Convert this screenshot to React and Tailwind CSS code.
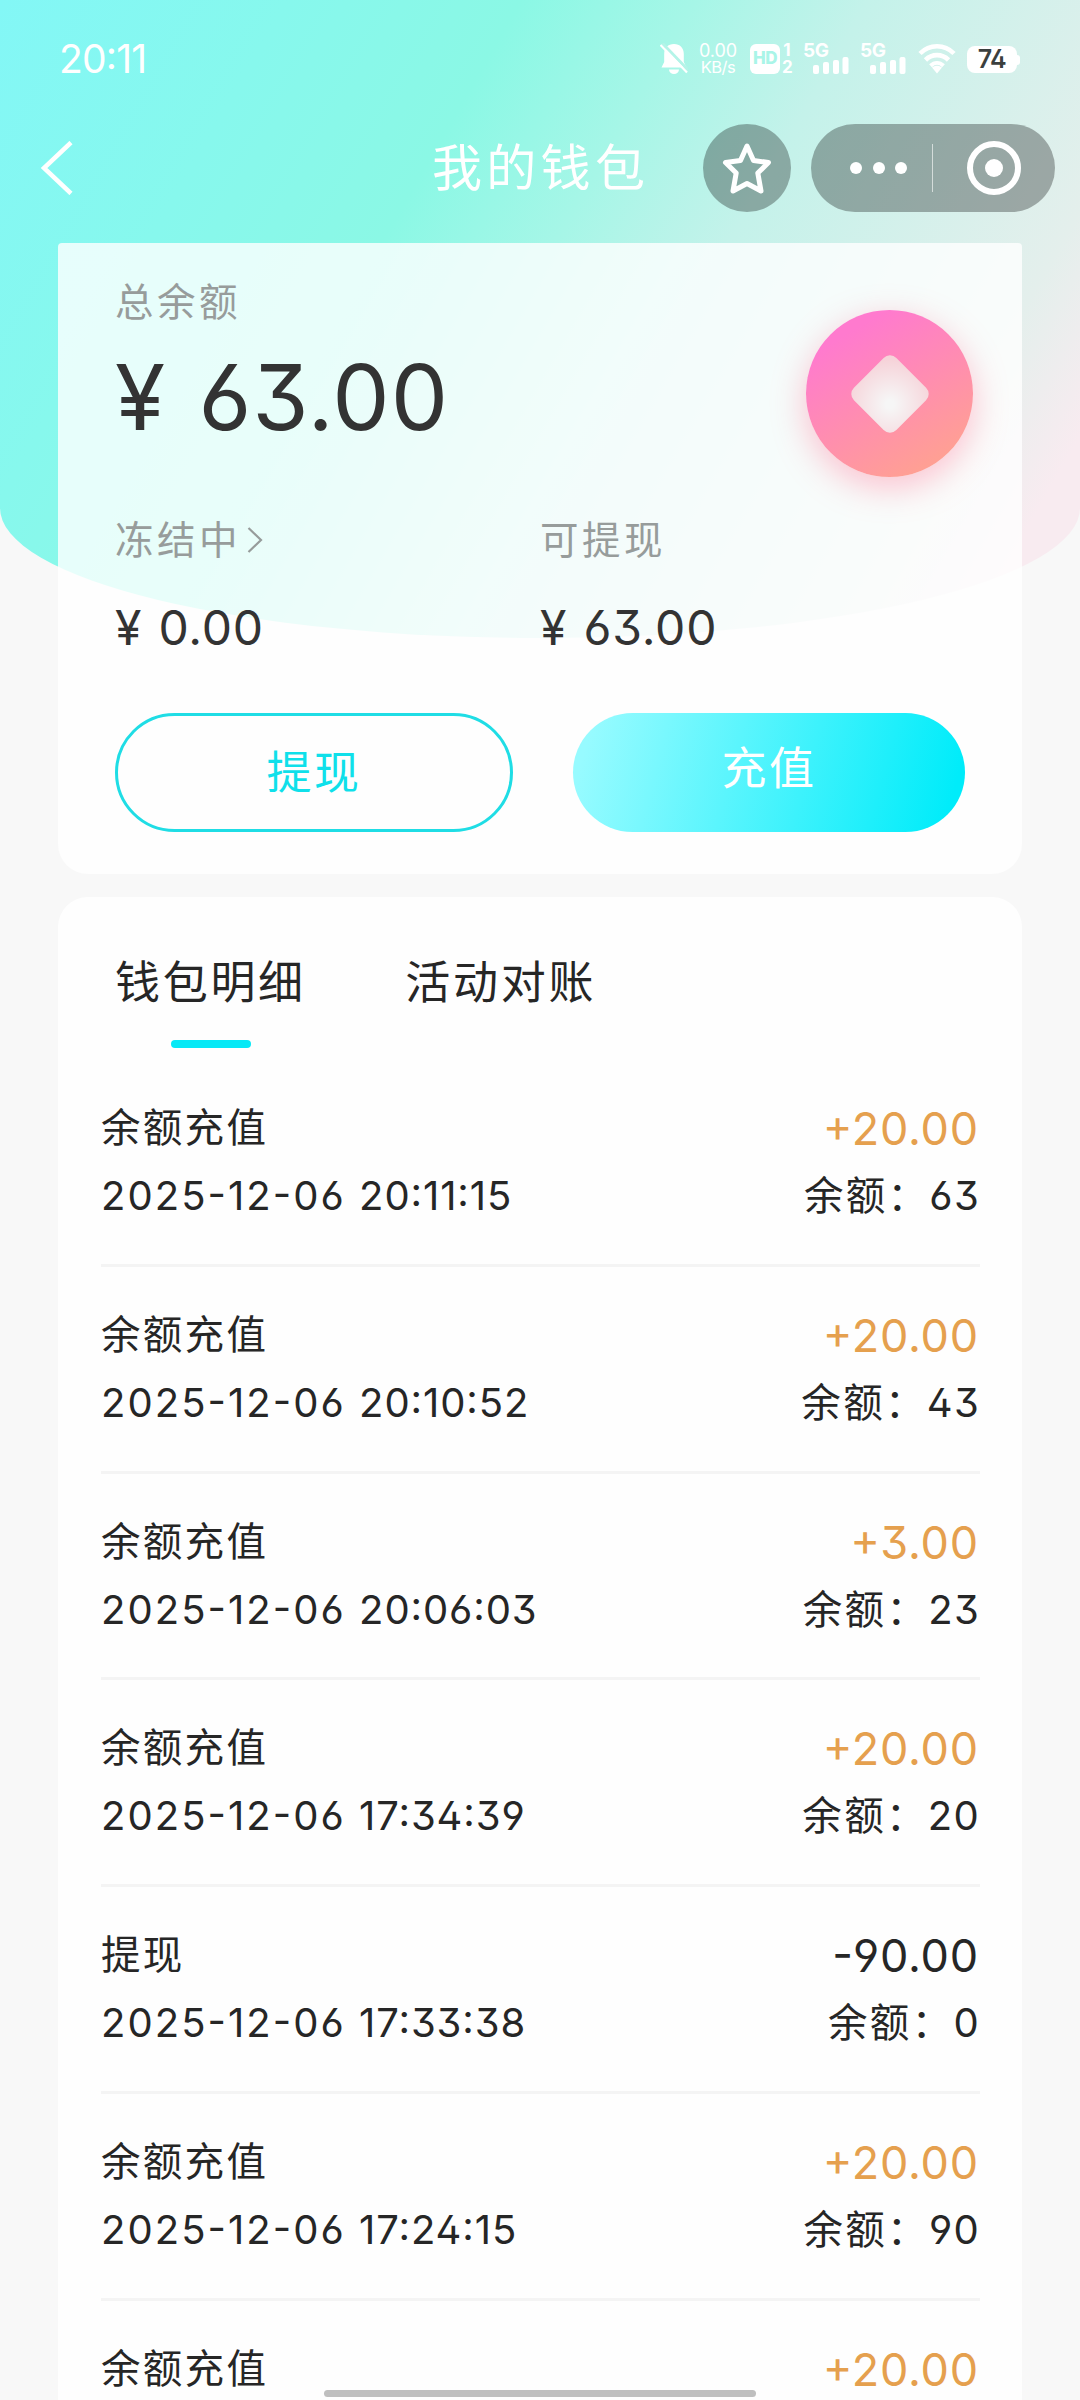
import { useState } from "react";

const records = [
  { title: "余额充值", date: "2025-12-06", time: "20:11:15", amount: "+20.00", balance: "63" },
  { title: "余额充值", date: "2025-12-06", time: "20:10:52", amount: "+20.00", balance: "43" },
  { title: "余额充值", date: "2025-12-06", time: "20:06:03", amount: "+3.00", balance: "23" },
  { title: "余额充值", date: "2025-12-06", time: "17:34:39", amount: "+20.00", balance: "20" },
  { title: "提现", date: "2025-12-06", time: "17:33:38", amount: "-90.00", balance: "0" },
  { title: "余额充值", date: "2025-12-06", time: "17:24:15", amount: "+20.00", balance: "90" },
  { title: "余额充值", amount: "+20.00" },
];

const tabs = ["钱包明细", "活动对账"];

// --- Status bar icons ---
const BellOff = () => (
  <svg width="28" height="32" viewBox="0 0 28 32" fill="none">
    <path
      d="M14 1C8 1 4.200 5 4.200 11v8L1.500 24.500h25L23.800 19v-8C23.800 5 20 1 14 1zM9 26.500a5 4.500 0 0 0 10 0z"
      fill="white"
    />
    <path d="M2.500 0.500L28 27" stroke="#b4f4e8" strokeWidth="3" />
    <path d="M0.500 2L27 29.500" stroke="white" strokeWidth="2.200" />
  </svg>
);

const Signal = () => (
  <div className="relative h-[31px] w-[46px]">
    <span className="absolute left-0 -top-[2px] text-[19px] leading-[19px] font-bold tracking-[-0.5px]">5G</span>
    <svg className="absolute bottom-0 right-0" width="36" height="17" viewBox="0 0 36 17" fill="white">
      <rect x="0" y="8" width="6" height="9" rx="2" />
      <rect x="10" y="5" width="6" height="12" rx="2" />
      <rect x="20" y="3" width="6" height="14" rx="2" />
      <rect x="29.500" y="0" width="6" height="17" rx="2" />
    </svg>
  </div>
);

const Wifi = () => (
  <svg width="38" height="31" viewBox="0 0 38 31" fill="none" stroke="white" strokeWidth="4.600">
    <path d="M2 10.500C11.500 0.800 26.500 0.800 36 10.500" />
    <path d="M7.500 17C14 10.500 24 10.500 30.500 17" />
    <path d="M12.500 22.800C16.500 19 21.500 19 25.500 22.800" strokeWidth="4" />
    <path d="M14 24.500L19 30.500L24 24.500C21 22.300 17 22.300 14 24.500z" fill="white" stroke="none" />
  </svg>
);

const StatusBar = () => (
  <div className="flex h-[117px] shrink-0 items-center justify-between pl-[59px] pr-[60px] text-white">
    <span className="text-[39px] leading-[40px] tracking-[-0.8px]">20:11</span>
    <div className="flex items-center">
      <BellOff />
      <div className="ml-[11px] w-[38px] text-center text-[18px] leading-[17px] tracking-[-0.1px]">
        <div>0.00</div>
        <div className="text-[16.500px] leading-[16px] tracking-[-0.5px]">KB/s</div>
      </div>
      <div className="ml-[13px] flex h-[30px] w-[30px] items-center justify-center rounded-[6px] bg-white">
        <span className="text-[17px] font-extrabold leading-none tracking-[-0.5px] text-[#aaf5e8]">HD</span>
      </div>
      <div className="ml-[2px] w-[10px] text-center text-[17px] font-bold leading-[17px]">
        <div>1</div>
        <div>2</div>
      </div>
      <div className="ml-[11px] flex gap-[11px]">
        <Signal />
        <Signal />
      </div>
      <div className="ml-[12px]">
        <Wifi />
      </div>
      <div className="ml-[11px] mt-[2px] flex items-center">
        <div className="flex h-[27px] w-[50px] items-center justify-center rounded-[8px] bg-white text-[25px] font-semibold tracking-[-0.5px] text-[#3b3f3e]">
          74
        </div>
        <div className="h-[10px] w-[3px] rounded-r-[3px] bg-white" />
      </div>
    </div>
  </div>
);

const NavBar = () => (
  <div className="flex h-[101px] shrink-0 items-center pl-[40px] pr-[25px] text-white">
    <svg width="33" height="54" viewBox="0 0 33 54" fill="none" stroke="white" strokeWidth="4.500">
      <path d="M31 1.500L4 27L31 52.500" />
    </svg>
    <h1 className="ml-[359px] w-[271px] text-[50px] leading-[60px] tracking-[4.300px]">我的钱包</h1>
    <button className="flex h-[88px] w-[88px] items-center justify-center rounded-full bg-black/30">
      <svg width="52" height="54" viewBox="0 0 52 54" fill="none" stroke="white" strokeWidth="5" strokeLinejoin="round">
        <path d="M26 5L32.500 19.500L47.500 21.500L36.800 32L40 50L26 42.500L12 50L15.200 32L4.500 21.500L19.500 19.500z" />
      </svg>
    </button>
    <div className="ml-[20px] flex h-[88px] w-[244px] items-center rounded-full bg-black/30">
      <div className="ml-[39px] flex gap-[10.500px]">
        <span className="h-[12px] w-[12px] rounded-full bg-white" />
        <span className="h-[12px] w-[12px] rounded-full bg-white" />
        <span className="h-[12px] w-[12px] rounded-full bg-white" />
      </div>
      <div className="ml-[25px] h-[48px] w-px bg-white/60" />
      <div className="ml-[34px] flex h-[54px] w-[54px] items-center justify-center rounded-full border-[6.500px] border-white">
        <span className="h-[18px] w-[18px] rounded-full bg-white" />
      </div>
    </div>
  </div>
);

const Coin = () => (
  <div className="mt-[33px] flex h-[167px] w-[167px] items-center justify-center rounded-full bg-[linear-gradient(150deg,#ff7ace_18%,#ff9f94_85%)] shadow-[0_10px_34px_rgba(255,120,150,0.45)]">
    <div className="h-[60px] w-[60px] rotate-45 rounded-[9px] bg-[radial-gradient(circle_at_62%_62%,#f6f6f6_8%,#f6d3d9_85%)]" />
  </div>
);

const BalanceCard = () => (
  <section className="mx-[58px] mt-[25px] h-[631px] shrink-0 rounded-t-[4px] rounded-b-[30px] bg-white/80 pl-[57px] pr-[49px] pt-[34px]">
    <div className="flex h-[175px] justify-between">
      <div>
        <div className="text-[38.500px] leading-[50px] tracking-[3.500px] text-[#979c9b]">总余额</div>
        <div className="mt-[15px] text-[91px] leading-[110px] tracking-[0.900px] text-[#333] [word-spacing:6px]">¥ 63.00</div>
      </div>
      <Coin />
    </div>
    <div className="mt-[63px] flex">
      <div className="w-[425px]">
        <div className="flex items-center text-[38.500px] leading-[50px] tracking-[3.500px] text-[#979c9b]">
          冻结中
          <svg className="ml-[6px]" width="16" height="26" viewBox="0 0 16 26" fill="none" stroke="#979c9b" strokeWidth="2.200">
            <path d="M1.500 1L14 13L1.500 25" />
          </svg>
        </div>
        <div className="mt-[35px] text-[48px] leading-[56px] tracking-[0.800px] text-[#333] [word-spacing:2px]">¥ 0.00</div>
      </div>
      <div>
        <div className="text-[38.500px] leading-[50px] tracking-[3.500px] text-[#979c9b]">可提现</div>
        <div className="mt-[35px] text-[48px] leading-[56px] tracking-[0.800px] text-[#333] [word-spacing:2px]">¥ 63.00</div>
      </div>
    </div>
    <div className="mt-[57px] flex gap-[60px]">
      <button className="h-[119px] w-[398px] rounded-full border-[3px] border-[#1fdde5] text-[45px] tracking-[2.500px] text-[#0fe0ea]">
        提现
      </button>
      <button className="h-[119px] w-[392px] rounded-full bg-[linear-gradient(105deg,#97fbff_5%,#00ecfa_95%)] pb-[7px] text-[45px] tracking-[2.500px] text-white">
        充值
      </button>
    </div>
  </section>
);

const RecordRow = ({ item }) => (
  <li className="flex h-[206.800px] justify-between border-b-[3px] border-[#f4f4f4] pt-[43px]">
    <div>
      <div className="text-[39.500px] leading-[50px] tracking-[2.300px]">{item.title}</div>
      {item.time && (
        <div className="mt-[18px] text-[40px] leading-[50px] tracking-[2.050px]">
          {item.date} <span className="tracking-[0.900px]">{item.time}</span>
        </div>
      )}
    </div>
    <div className="text-right">
      <div
        className={`pr-[1px] text-[45px] leading-[52px] tracking-[0.800px] ${
          item.amount.startsWith("+") ? "text-[#e5a04e]" : "text-[#262626]"
        }`}
      >
        {item.amount}
      </div>
      {item.balance && (
        <div className="mt-[16px] text-[39.500px] leading-[50px] tracking-[2.300px]">
          余额：<span className="text-[40px] tracking-[1.300px]">{item.balance}</span>
        </div>
      )}
    </div>
  </li>
);

export default function App() {
  const [active, setActive] = useState(0);

  return (
    <div className="grid h-[2400px] w-[1080px] overflow-hidden bg-[#f8f8f8] font-['Inter','Noto_Sans_CJK_SC',sans-serif] [font-feature-settings:'ss01','case']">
      {/* Curved header background */}
      <div className="col-start-1 row-start-1 h-[638px] rounded-b-[50%_130px] bg-[linear-gradient(120deg,#83f7f6_0%,#87f8ed_20%,#8bf8e5_36%,#a6f6e7_48%,#c4f2ea_60%,#e4efec_83%,#f8ebf0_92%)]" />

      <div className="col-start-1 row-start-1 flex h-[2400px] flex-col">
        <StatusBar />
        <NavBar />
        <BalanceCard />

        <section className="mx-[58px] mt-[23px] min-h-0 flex-1 overflow-hidden rounded-t-[30px] bg-[#fefefe] text-[#262626]">
          <div className="flex h-[163px] gap-[102px] pl-[57px] pt-[56px]">
            {tabs.map((tab, i) => (
              <button key={tab} onClick={() => setActive(i)} className="flex flex-col items-center">
                <span className="-mr-[2.500px] text-[45px] leading-[60px] tracking-[2.700px]">{tab}</span>
                {active === i && <span className="mt-[27px] ml-[3px] h-[8px] w-[80px] rounded-full bg-[#06e9f6]" />}
              </button>
            ))}
          </div>
          <ul className="pl-[43px] pr-[42px]">
            {records.map((item, i) => (
              <RecordRow key={i} item={item} />
            ))}
          </ul>
        </section>
      </div>

      {/* Home indicator */}
      <div className="z-10 col-start-1 row-start-1 mb-[3px] h-[7px] w-[432px] self-end justify-self-center rounded-full bg-[#bfbfbf]" />
    </div>
  );
}
